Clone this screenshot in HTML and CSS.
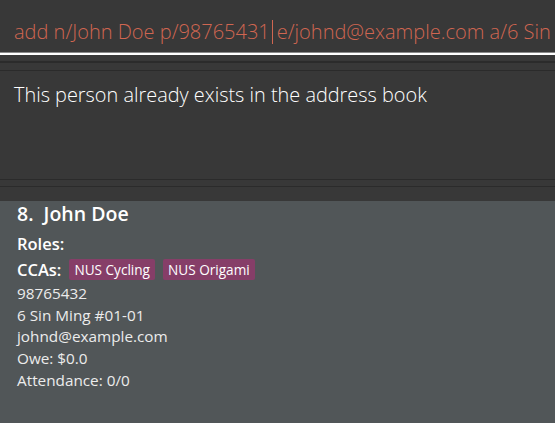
FILE: index.html
```html
<!DOCTYPE html>
<html>
<head>
<meta charset="utf-8">
<link rel="stylesheet" href="styles.css">
</head>
<body>
<div class="app">
  <div class="command-box">
    <div class="command-field">
      <span class="cmd-text">add n/John Doe p/98765431</span><span class="caret"></span><span class="cmd-text">e/johnd@example.com a/6 Sin</span>
    </div>
  </div>
  <div class="spacer-a"></div>
  <div class="line thick"></div>
  <div class="spacer-b"></div>
  <div class="line"></div>
  <div class="result-display">
    <p class="result-text">This person already exists in the address book</p>
  </div>
  <div class="line"></div>
  <div class="spacer-c"></div>
  <div class="line"></div>
  <div class="spacer-d"></div>
  <div class="person-card">
    <div class="name">8.&nbsp; John Doe</div>
    <div class="label-row"><span class="label">Roles:</span></div>
    <div class="label-row"><span class="label">CCAs:</span><span class="tag">NUS Cycling</span><span class="tag">NUS Origami</span></div>
    <div class="details">
      <div class="detail">98765432</div>
      <div class="detail">6 Sin Ming #01-01</div>
      <div class="detail">johnd@example.com</div>
      <div class="detail">Owe: $0.0</div>
      <div class="detail">Attendance: 0/0</div>
    </div>
  </div>
</div>
</body>
</html>
```
FILE: styles.css
```css
html, body {
  margin: 0;
  padding: 0;
  background: #383838;
  overflow: hidden;
}
.app {
  width: 555px;
  height: 423px;
  display: flex;
  flex-direction: column;
  font-family: "Open Sans", "Noto Sans", sans-serif;
}
.command-box {
  height: 53px;
  border-bottom: 2px solid #ffffff;
  box-shadow: inset 0 -1px 0 #8a8a8a;
  display: flex;
  align-items: center;
  padding-left: 14px;
  overflow: hidden;
  white-space: nowrap;
  flex: none;
}
.command-field {
  display: flex;
  align-items: center;
  font-size: 20px;
  font-weight: 300;
  color: #d06651;
  padding-top: 10px;
}
.caret {
  display: inline-block;
  width: 1px;
  height: 24px;
  background: #d06651;
  margin: 0 4px 0 2px;
}
.spacer-a { height: 6px; flex: none; }
.spacer-b { height: 7px; flex: none; }
.spacer-c { height: 6px; flex: none; }
.spacer-d { height: 14px; flex: none; }
.line { height: 1px; background: #2b2b2b; flex: none; }
.line.thick { height: 2px; }
.result-display {
  height: 108px;
  flex: none;
  padding: 0 14px;
}
.result-text {
  margin: 0;
  padding-top: 11px;
  color: #ffffff;
  font-size: 19.9px;
  font-weight: 300;
  line-height: 26px;
}
.person-card {
  flex: 1;
  background: #515658;
  padding: 1px 17px 0;
  color: #ffffff;
}
.name {
  font-size: 19.5px;
  font-weight: 600;
  line-height: 24px;
  margin-bottom: 4px;
}
.label-row {
  display: flex;
  align-items: center;
  gap: 6px;
  height: 26px;
}
.label {
  font-size: 16.5px;
  font-weight: 600;
}
.tag {
  background: #863e68;
  color: #ffffff;
  font-size: 13.6px;
  font-weight: 500;
  padding: 0 5px;
  border-radius: 2px;
  margin-left: 2px;
  line-height: 21px;
}
.details {
  padding-top: 1px;
}
.detail {
  font-size: 15.3px;
  line-height: 21.7px;
  color: #ececec;
}
```
